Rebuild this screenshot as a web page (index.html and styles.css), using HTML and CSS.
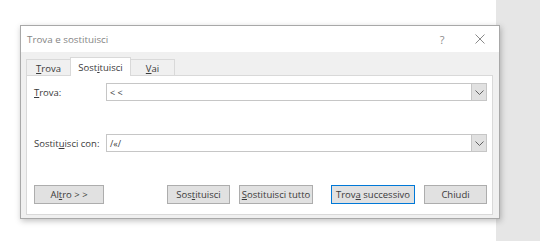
FILE: index.html
```html
<!DOCTYPE html>
<html lang="it">
<head>
    <meta charset="UTF-8">
    <title>Trova e sostituisci</title>
    <link rel="stylesheet" href="styles.css">
</head>
<body>
    <!-- Finestra di dialogo -->
    <div class="dialog">
        <div class="titlebar">
            <span class="title">Trova e sostituisci</span>
            <span class="btn-help">?</span>
            <span class="btn-close">
                <svg width="10" height="10" viewBox="0 0 10 10">
                    <path d="M0.5 0.5 L9.5 9.5 M9.5 0.5 L0.5 9.5" stroke="#8a8a8a" stroke-width="1" fill="none"/>
                </svg>
            </span>
        </div>

        <div class="dialog-body">
            <div class="tabs">
                <div class="tab"><u>T</u>rova</div>
                <div class="tab active">Sost<u>i</u>tuisci</div>
                <div class="tab"><u>V</u>ai</div>
            </div>

            <div class="panel">
                <div class="row">
                    <label class="label"><u>T</u>rova:</label>
                    <div class="combo">
                        <span class="combo-text">&lt; &lt;</span>
                        <span class="combo-arrow">
                            <svg width="9" height="5" viewBox="0 0 9 5">
                                <path d="M0.5 0.5 L4.5 4.5 L8.5 0.5" stroke="#606060" stroke-width="1" fill="none"/>
                            </svg>
                        </span>
                    </div>
                </div>

                <div class="row">
                    <label class="label">Sostit<u>u</u>isci con:</label>
                    <div class="combo">
                        <span class="combo-text">/«/</span>
                        <span class="combo-arrow">
                            <svg width="9" height="5" viewBox="0 0 9 5">
                                <path d="M0.5 0.5 L4.5 4.5 L8.5 0.5" stroke="#606060" stroke-width="1" fill="none"/>
                            </svg>
                        </span>
                    </div>
                </div>

                <div class="buttons">
                    <button class="btn btn-altro">Al<u>t</u>ro &gt; &gt;</button>
                    <div class="spacer"></div>
                    <button class="btn btn-sost">Sos<u>t</u>ituisci</button>
                    <button class="btn btn-tutto"><u>S</u>ostituisci tutto</button>
                    <button class="btn btn-default">Trov<u>a</u> successivo</button>
                    <button class="btn btn-chiudi">Chiudi</button>
                </div>
            </div>
        </div>
    </div>
</body>
</html>
```

FILE: styles.css
```css
/* Sfondo: bianco con striscia grigia a destra */
body {
  margin: 0;
  height: 241px;
  overflow: hidden;
  font-family: "Open Sans", sans-serif;
  font-size: 9.5px;
  color: #3a3a3a;
  background: linear-gradient(to right, #ffffff 496px, #e6e6e6 496px);
}

u {
  text-underline-offset: 1px;
}

/* Finestra */
.dialog {
  box-sizing: border-box;
  width: 480px;
  height: 194px;
  margin: 25px 0 0 20px;
  border: 1px solid #a8a8a8;
  background-color: #f0f0f0;
  box-shadow: 1px 2px 6px rgba(0, 0, 0, 0.25);
  display: flex;
  flex-direction: column;
}

.titlebar {
  height: 26px;
  background-color: #ffffff;
  display: flex;
  align-items: center;
  padding-left: 6px;
}

.title {
  flex: 1;
  color: #858585;
  font-size: 9.8px;
}

.btn-help {
  color: #8a8a8a;
  font-size: 11px;
  width: 38px;
  text-align: center;
}

.btn-close {
  width: 38px;
  display: flex;
  justify-content: center;
}

.dialog-body {
  flex: 1;
  padding: 5px 6px 3px 5px;
  display: flex;
  flex-direction: column;
}

/* Schede */
.tabs {
  display: flex;
  align-items: flex-end;
  height: 18px;
}

.tab {
  box-sizing: border-box;
  height: 17px;
  border: 1px solid #d9d9d9;
  border-bottom: none;
  background-color: #f0f0f0;
  display: flex;
  align-items: center;
  justify-content: center;
  margin-bottom: -1px;
}

.tab:first-child {
  width: 45px;
}

.tab + .tab {
  border-left: none;
}

.tab.active {
  height: 19px;
  width: 61px;
  background-color: #ffffff;
  position: relative;
  margin-left: -1px;
  border-left: 1px solid #d9d9d9;
  z-index: 1;
}

.tab:last-child {
  width: 44px;
}

/* Pannello */
.panel {
  flex: 1;
  background-color: #ffffff;
  border: 1px solid #d9d9d9;
  padding: 7px 5px 0 7px;
  display: flex;
  flex-direction: column;
}

.row {
  display: flex;
  align-items: center;
  height: 18px;
  margin-bottom: 33px;
}

.label {
  width: 72px;
  white-space: nowrap;
}

.combo {
  flex: 1;
  box-sizing: border-box;
  height: 18px;
  border: 1px solid #c6c6c6;
  display: flex;
  align-items: center;
}

.combo-text {
  flex: 1;
  padding-left: 3px;
  font-size: 9px;
}

.combo-arrow {
  box-sizing: border-box;
  width: 15px;
  height: 16px;
  background-color: #e1e1e1;
  border-left: 1px solid #c6c6c6;
  display: flex;
  align-items: center;
  justify-content: center;
}

/* Pulsanti */
.buttons {
  display: flex;
  height: 19px;
}

.spacer {
  flex: 1;
}

.btn {
  box-sizing: border-box;
  height: 19px;
  padding: 0;
  font-family: inherit;
  font-size: 9.5px;
  white-space: nowrap;
  color: #3a3a3a;
  background-color: #e1e1e1;
  border: 1px solid #adadad;
}

.btn-altro {
  width: 70px;
}

.btn-sost {
  width: 63px;
  margin-right: 9px;
}

.btn-tutto {
  width: 74px;
  margin-right: 18px;
}

.btn-default {
  width: 84px;
  margin-right: 9px;
  border: 1px solid #0078d7;
  box-shadow: inset 0 0 0 1px #e1e1e1;
}

.btn-chiudi {
  width: 63px;
}
```
